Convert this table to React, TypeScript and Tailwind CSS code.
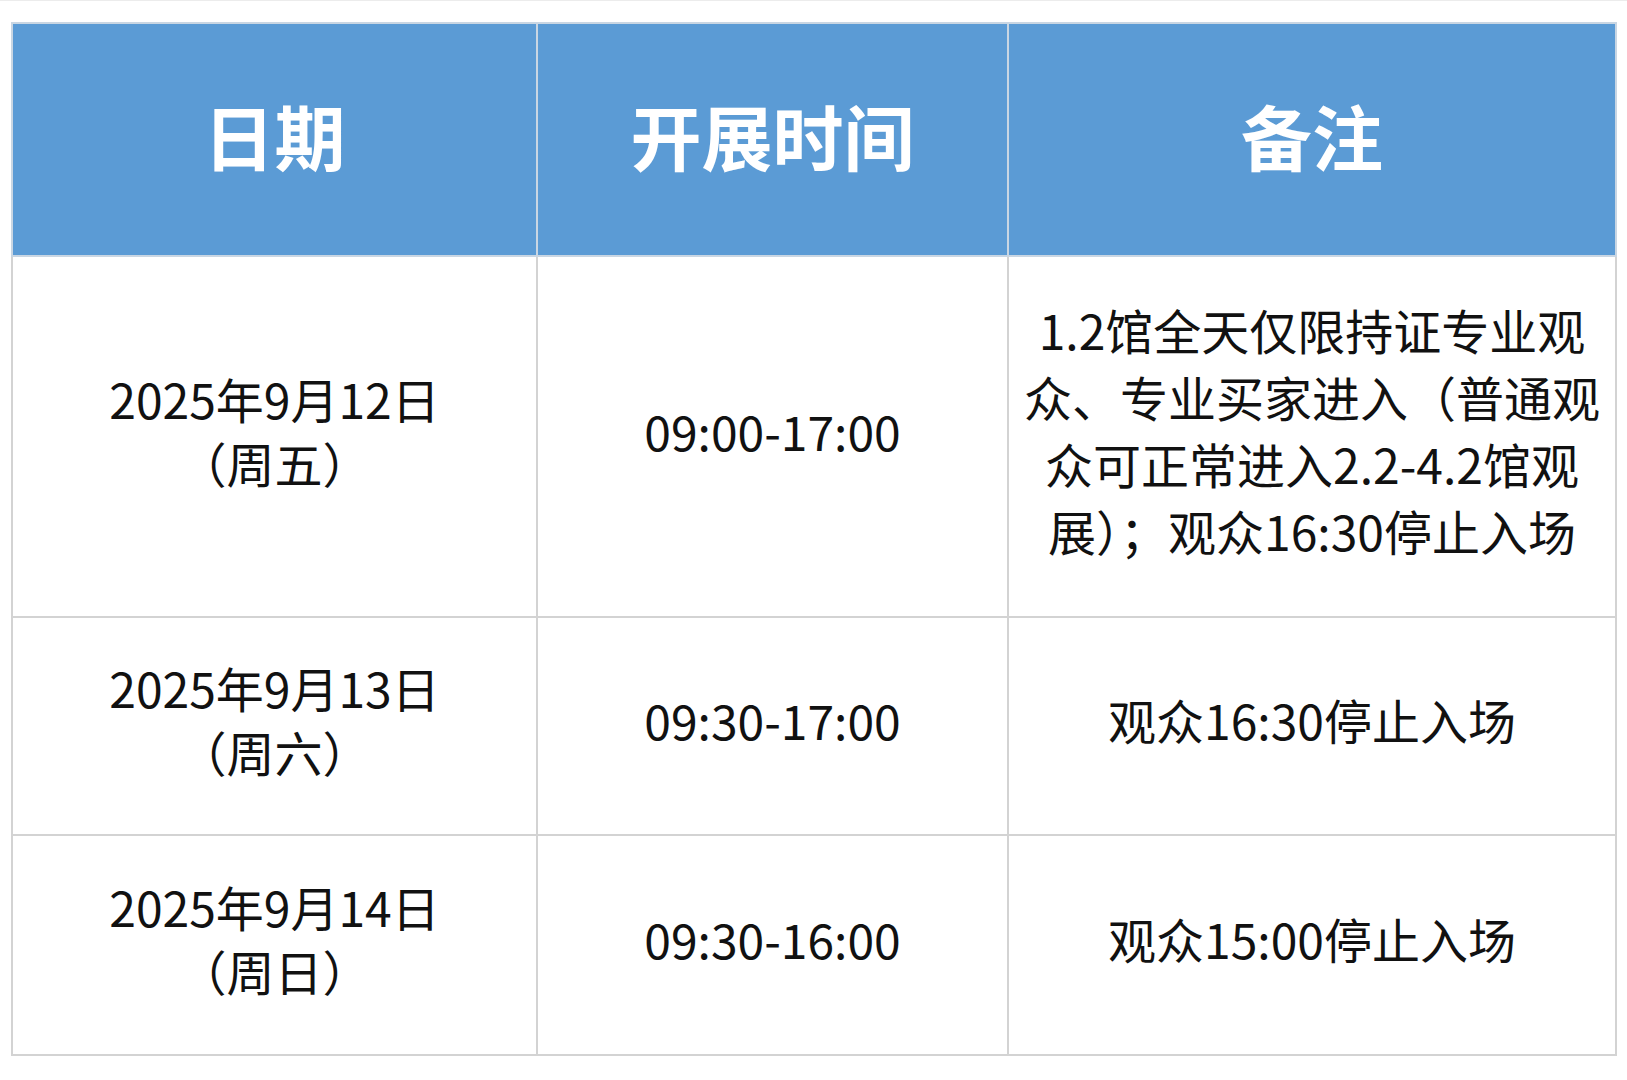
import React from "react";

const font = { fontFamily: '"Noto Sans CJK SC", "Noto Sans", sans-serif' };

export default function App() {
  const rows = [
    { date: "2025年9月12日", week: "（周五）", time: "09:00-17:00", note: ["1.2馆全天仅限持证专业观", "众、专业买家进入（普通观", "众可正常进入2.2-4.2馆观", "展）；观众16:30停止入场"], h: "h-[361px]" },
    { date: "2025年9月13日", week: "（周六）", time: "09:30-17:00", note: ["观众16:30停止入场"], h: "h-[218px]" },
    { date: "2025年9月14日", week: "（周日）", time: "09:30-16:00", note: ["观众15:00停止入场"], h: "h-[220px]" },
  ];
  return (
    <div className="w-[1627px] h-[1080px] bg-white border-t border-[#ececec]" style={font}>
      <div className="pt-[21px] pl-[11px]">
        <table className="table-fixed border-collapse w-[1604px] border-2 border-[#d3d3d3]">
          <colgroup>
            <col className="w-[525px]" />
            <col className="w-[471px]" />
            <col className="w-[608px]" />
          </colgroup>
          <thead>
            <tr className="h-[233px] bg-[#5b9bd5]">
              <th className="border-2 border-[#c9d6e3] text-white font-bold text-[71px] leading-none text-center align-middle pb-[10px]">日期</th>
              <th className="border-2 border-[#c9d6e3] text-white font-bold text-[71px] leading-none text-center align-middle pb-[10px]">开展时间</th>
              <th className="border-2 border-[#c9d6e3] text-white font-bold text-[71px] leading-none text-center align-middle pb-[10px]">备注</th>
            </tr>
          </thead>
          <tbody>
            {rows.map((r, i) => (
              <tr key={i} className={r.h}>
                <td className="border-2 border-[#d3d3d3] text-center align-middle text-[48px] leading-[64px] text-[#111111] pb-[14px]">
                  <div>{r.date}</div>
                  <div>{r.week}</div>
                </td>
                <td className="border-2 border-[#d3d3d3] text-center align-middle text-[48px] leading-[64px] text-[#111111] pb-[14px]">
                  {r.time}
                </td>
                <td className="border-2 border-[#d3d3d3] text-center align-middle text-[48px] leading-[67px] text-[#111111] px-[10px] pb-[14px]">
                  {r.note.map((l, j) => (
                    <div key={j} className="whitespace-nowrap">{l}</div>
                  ))}
                </td>
              </tr>
            ))}
          </tbody>
        </table>
      </div>
    </div>
  );
}
